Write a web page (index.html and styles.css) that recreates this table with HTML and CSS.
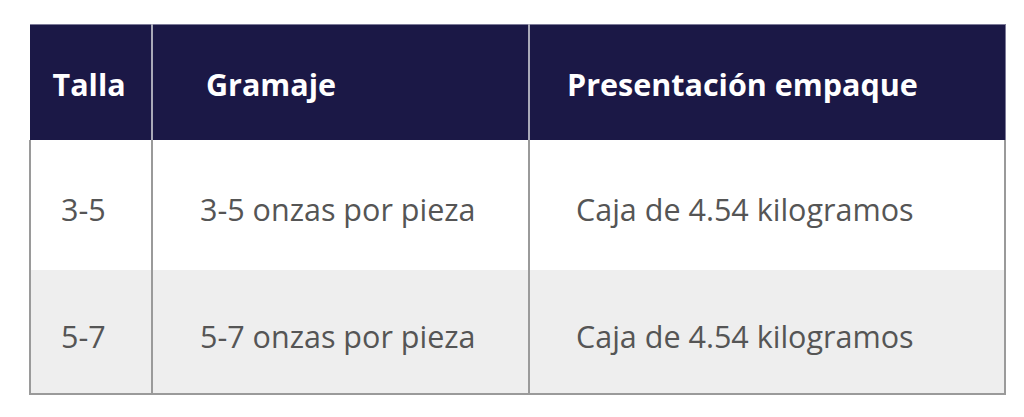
FILE: index.html
```html
<!DOCTYPE html>
<html lang="es">
<head>
<meta charset="utf-8">
<link rel="stylesheet" href="styles.css">
</head>
<body>
<div class="wrap">
<table class="spec">
  <colgroup>
    <col class="c1"><col class="c2"><col class="c3">
  </colgroup>
  <thead>
    <tr>
      <th class="p1">Talla</th>
      <th class="p2">Gramaje</th>
      <th class="p3">Presentación empaque</th>
    </tr>
  </thead>
  <tbody>
    <tr class="r1">
      <td class="d1">3-5</td>
      <td class="d2">3-5 onzas por pieza</td>
      <td class="d3">Caja de 4.54 kilogramos</td>
    </tr>
    <tr class="r2">
      <td class="d1">5-7</td>
      <td class="d2">5-7 onzas por pieza</td>
      <td class="d3">Caja de 4.54 kilogramos</td>
    </tr>
  </tbody>
</table>
</div>
</body>
</html>
```
FILE: styles.css
```css
html, body {
  margin: 0;
  padding: 0;
  background: #ffffff;
}
.wrap {
  padding: 24px 0 0 29px;
}
.spec {
  border-collapse: collapse;
  width: 975px;
  table-layout: fixed;
  font-family: "Open Sans", "Liberation Sans", sans-serif;
}
.c1 { width: 122px; }
.c2 { width: 377px; }
.c3 { width: 476px; }
.spec th {
  background: #1b1846;
  color: #ffffff;
  font-weight: 700;
  font-size: 30.5px;
  height: 113px;
  text-align: left;
  padding: 2px 0 0 0;
  border-left: 2px solid #a9a9b8;
  border-top: 1px solid #7c7a98;
}
.spec th:first-child { border-left: 1px solid #1b1846; }
.spec th:last-child { border-right: 1px solid #7c7a98; }
.spec td {
  color: #555555;
  font-size: 30.5px;
  padding: 8px 0 0 0;
  text-align: left;
  border-left: 2px solid #9a9a9a;
}
.spec td:last-child { border-right: 2px solid #9a9a9a; }
.spec tbody tr:last-child td { border-bottom: 2px solid #9a9a9a; }
.r1 td { height: 122px; background: #ffffff; }
.r2 td { height: 114px; background: #eeeeee; padding-top: 9px; }
.p1 { padding-left: 22px !important; }
.p2 { padding-left: 53px !important; }
.p3 { padding-left: 37px !important; }
.d1 { padding-left: 30px !important; }
.d2 { padding-left: 47px !important; }
.d3 { padding-left: 46px !important; }
```
